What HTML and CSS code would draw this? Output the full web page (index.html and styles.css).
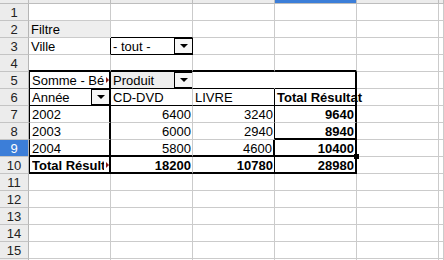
FILE: index.html
```html
<!DOCTYPE html>
<html lang="fr">
<head>
    <meta charset="UTF-8">
    <title>Tableau croisé</title>
    <link rel="stylesheet" href="styles.css">
</head>
<body>

    <div class="sheet">
        <!-- en-tête des colonnes -->
        <div class="corner"></div>
        <div class="colh"></div><div class="colh"></div><div class="colh"></div>
        <div class="colh sel"></div><div class="colh"></div><div class="colh"></div>

        <div class="rowh">1</div>
        <div class="c"></div><div class="c"></div><div class="c"></div><div class="c"></div><div class="c"></div><div class="c"></div>

        <div class="rowh">2</div>
        <div class="c field">Filtre</div><div class="c bb"></div><div class="c"></div><div class="c"></div><div class="c"></div><div class="c"></div>

        <div class="rowh">3</div>
        <div class="c br">Ville</div>
        <div class="c dd-cell bb br"><span class="t">- tout -</span><span class="dd"></span></div>
        <div class="c"></div><div class="c"></div><div class="c"></div><div class="c"></div>

        <div class="rowh">4</div>
        <div class="c bb2"></div><div class="c bb2"></div><div class="c bb2"></div><div class="c bb2"></div><div class="c"></div><div class="c"></div>

        <!-- tableau croisé -->
        <div class="rowh">5</div>
        <div class="c bl br2 bb clip"><span class="t">Somme - Bénéfice</span><span class="more"></span></div>
        <div class="c dd-cell field bb"><span class="t">Produit</span><span class="dd"></span></div>
        <div class="c bb nr"></div>
        <div class="c bb br2"></div>
        <div class="c"></div><div class="c"></div>

        <div class="rowh">6</div>
        <div class="c dd-cell bl br2 bb"><span class="t">Année</span><span class="dd"></span></div>
        <div class="c bb">CD-DVD</div>
        <div class="c bb br">LIVRE</div>
        <div class="c bb br2 b">Total Résultat</div>
        <div class="c"></div><div class="c"></div>

        <div class="rowh">7</div>
        <div class="c bl br2">2002</div>
        <div class="c n">6400</div>
        <div class="c n br">3240</div>
        <div class="c n b br2">9640</div>
        <div class="c"></div><div class="c"></div>

        <div class="rowh">8</div>
        <div class="c bl br2">2003</div>
        <div class="c n">6000</div>
        <div class="c n br">2940</div>
        <div class="c n b br2 bb2">8940</div>
        <div class="c"></div><div class="c"></div>

        <div class="rowh sel">9</div>
        <div class="c bl br2 bb2">2004</div>
        <div class="c n bb2">5800</div>
        <div class="c n br2 bb2">4600</div>
        <div class="c n b br2 bb2">10400<span class="handle"></span></div>
        <div class="c"></div><div class="c"></div>

        <div class="rowh">10</div>
        <div class="c bl br2 bb2 b clip"><span class="t">Total Résultat</span><span class="more"></span></div>
        <div class="c n b bb2">18200</div>
        <div class="c n b br bb2">10780</div>
        <div class="c n b br2 bb2">28980</div>
        <div class="c"></div><div class="c"></div>

        <div class="rowh">11</div>
        <div class="c"></div><div class="c"></div><div class="c"></div><div class="c"></div><div class="c"></div><div class="c"></div>
        <div class="rowh">12</div>
        <div class="c"></div><div class="c"></div><div class="c"></div><div class="c"></div><div class="c"></div><div class="c"></div>
        <div class="rowh">13</div>
        <div class="c"></div><div class="c"></div><div class="c"></div><div class="c"></div><div class="c"></div><div class="c"></div>
        <div class="rowh">14</div>
        <div class="c"></div><div class="c"></div><div class="c"></div><div class="c"></div><div class="c"></div><div class="c"></div>
        <div class="rowh">15</div>
        <div class="c"></div><div class="c"></div><div class="c"></div><div class="c"></div><div class="c"></div><div class="c"></div>
        <div class="rowh"></div>
        <div class="c"></div><div class="c"></div><div class="c"></div><div class="c"></div><div class="c"></div><div class="c"></div>
    </div>

</body>
</html>
```

FILE: styles.css
```css
body {
    margin: 0;
    font-family: "Liberation Sans", Arial, sans-serif;
    font-size: 13px;
    color: #000;
    background: #fff;
    overflow: hidden;
}
.sheet {
    display: grid;
    grid-template-columns: 29px repeat(5, 82px) 1fr;
    grid-template-rows: 4px;
    grid-auto-rows: 17px;
}
.corner, .colh {
    box-sizing: border-box;
    background: #ececec;
    border-right: 1px solid #bdbdbd;
    border-bottom: 1px solid #bdbdbd;
}
.colh.sel {
    background: #3c7ed8;
}
.rowh {
    box-sizing: border-box;
    background: #ececec;
    border-right: 1px solid #b5b5b5;
    border-bottom: 1px solid #c4c4c4;
    text-align: center;
    color: #222;
    padding-top: 1px;
    line-height: 15px;
}
.rowh.sel {
    background: #3c7ed8;
    color: #fff;
}
.c {
    box-sizing: border-box;
    position: relative;
    border-right: 1px solid #cbcbcb;
    border-bottom: 1px solid #cbcbcb;
    padding: 1px 2px 0;
    line-height: 15px;
    white-space: nowrap;
    min-width: 0;
}
.field {
    background: #eeeeee;
}
.n {
    text-align: right;
    padding-right: 1px;
}
.b {
    font-weight: bold;
}
.clip .t {
    display: block;
    overflow: hidden;
    margin-right: 3px;
}
.bb { border-bottom: 1px solid #000; }
.bb2 { border-bottom: 2px solid #000; }
.br { border-right: 1px solid #000; }
.br2 { border-right: 2px solid #000; }
.bl { border-left: 1px solid #000; }
.nr { border-right-color: #fff; }

/* listes déroulantes des champs */
.dd-cell {
    display: flex;
    padding: 0;
}
.dd-cell .t {
    flex: 1;
    padding: 1px 2px 0;
    overflow: hidden;
}
.dd {
    flex: none;
    width: 18px;
    box-sizing: border-box;
    border: 1px solid #000;
    border-right-width: 0;
    background: #f7f7f7;
    display: flex;
    align-items: center;
    justify-content: center;
}
.dd::after {
    content: "";
    border-left: 4px solid transparent;
    border-right: 4px solid transparent;
    border-top: 4px solid #000;
}
.more {
    position: absolute;
    right: 0;
    top: 5px;
    border-top: 3px solid transparent;
    border-bottom: 3px solid transparent;
    border-left: 3px solid #8a1a10;
}
.handle {
    position: absolute;
    right: -4px;
    bottom: -4px;
    width: 5px;
    height: 5px;
    background: #000;
    z-index: 1;
}
```
